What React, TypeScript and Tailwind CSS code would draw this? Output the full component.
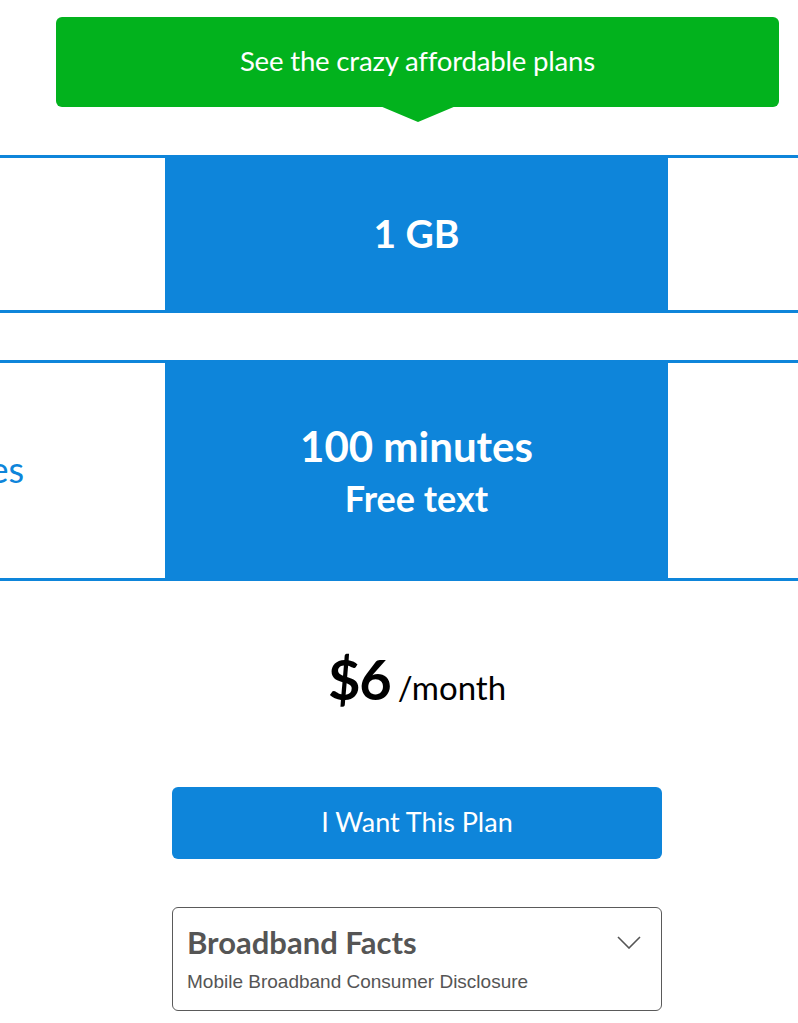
import React from "react";

export default function App() {
  return (
    <div className="w-[798px] h-[1023px] overflow-hidden bg-white" style={{ fontFamily: "Lato, 'Open Sans', sans-serif" }}>
      <div className="pt-[17px]">
        <div className="relative ml-[56px] w-[723px] h-[90px] rounded-[6px] bg-[#02b21d] flex items-center justify-center">
          <span className="text-white text-[27.6px] tracking-[-0.2px] -mt-[2px]">See the crazy affordable plans</span>
          <svg className="absolute left-[324px] top-[89px]" width="76" height="17" viewBox="0 0 76 17">
            <polygon points="0,0 76,0 38,16" fill="#02b21d" />
          </svg>
        </div>
      </div>

      <div className="mt-[48px] flex h-[158px] border-y-[3px] border-[#0e85da]">
        <div className="w-[165px] shrink-0" />
        <div className="w-[503px] shrink-0 bg-[#0e85da] -my-[3px] flex items-center justify-center">
          <span className="text-white font-bold text-[39px] -mt-[2px]">1 GB</span>
        </div>
        <div className="flex-1" />
      </div>

      <div className="mt-[47px] flex h-[221px] border-y-[3px] border-[#0e85da]">
        <div className="w-[165px] shrink-0 overflow-hidden flex items-center justify-end pr-[141px]">
          <span className="text-[36px] whitespace-nowrap text-[#0e85da] -mt-[4px]">Minutes</span>
        </div>
        <div className="w-[503px] shrink-0 bg-[#0e85da] -my-[3px] flex flex-col items-center justify-center text-white font-bold">
          <span className="text-[42px] leading-[54px]">100 minutes</span>
          <span className="text-[36px] leading-[50px]">Free text</span>
        </div>
        <div className="flex-1" />
      </div>

      <div className="mt-[66px] flex items-baseline justify-center pl-[36px]">
        <span className="text-[56px] font-bold text-black leading-[64px] tracking-[-1px]">$6</span>
        <span className="text-[33px] text-black ml-[7px]">/month</span>
      </div>

      <div className="mt-[74px] ml-[172px] w-[490px] h-[72px] rounded-[6px] bg-[#0e85da] flex items-center justify-center">
        <span className="text-white text-[27px]">I Want This Plan</span>
      </div>

      <div className="mt-[48px] ml-[172px] w-[490px] h-[104px] rounded-[6px] border-[1.5px] border-[#5a5a5a] relative px-[14px] pt-[14px]">
        <div className="text-[31px] font-bold text-[#555] leading-[40px]">Broadband Facts</div>
        <div className="text-[19px] text-[#555] mt-[6px]" style={{ fontFamily: "'Liberation Sans', Arial, sans-serif" }}>Mobile Broadband Consumer Disclosure</div>
        <svg className="absolute right-[20px] top-[28px]" width="24" height="13" viewBox="0 0 24 13">
          <polyline points="1,1 12,12 23,1" fill="none" stroke="#555" strokeWidth="1.6" />
        </svg>
      </div>
    </div>
  );
}
